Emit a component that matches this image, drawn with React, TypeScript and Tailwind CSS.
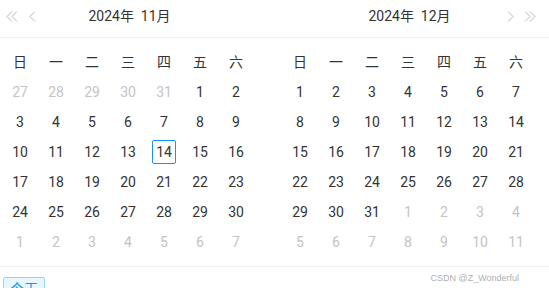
import React from "react";

type Cell = { d: number; muted?: boolean; selected?: boolean };

const week = ["日", "一", "二", "三", "四", "五", "六"];

function buildNov(): Cell[] {
  const cells: Cell[] = [];
  [27, 28, 29, 30, 31].forEach((d) => cells.push({ d, muted: true }));
  for (let d = 1; d <= 30; d++) cells.push({ d, selected: d === 14 });
  for (let d = 1; d <= 7; d++) cells.push({ d, muted: true });
  return cells;
}

function buildDec(): Cell[] {
  const cells: Cell[] = [];
  for (let d = 1; d <= 31; d++) cells.push({ d });
  for (let d = 1; d <= 11; d++) cells.push({ d, muted: true });
  return cells;
}

function Chevron({ dir }: { dir: "l" | "r" }) {
  return (
    <svg width="7" height="11" viewBox="0 0 7 11" fill="none">
      <path
        d={dir === "l" ? "M6 0.5L1 5.5L6 10.5" : "M1 0.5L6 5.5L1 10.5"}
        stroke="#b8b8b8"
        strokeWidth="1"
      />
    </svg>
  );
}

function Double({ dir }: { dir: "l" | "r" }) {
  return (
    <svg width="12" height="11" viewBox="0 0 12 11" fill="none">
      {dir === "l" ? (
        <>
          <path d="M6 0.5L1 5.5L6 10.5" stroke="#b8b8b8" strokeWidth="1" />
          <path d="M11 0.5L6 5.5L11 10.5" stroke="#b8b8b8" strokeWidth="1" />
        </>
      ) : (
        <>
          <path d="M1 0.5L6 5.5L1 10.5" stroke="#b8b8b8" strokeWidth="1" />
          <path d="M6 0.5L11 5.5L6 10.5" stroke="#b8b8b8" strokeWidth="1" />
        </>
      )}
    </svg>
  );
}

function Header({ title, side }: { title: string; side: "l" | "r" }) {
  return (
    <div className="grid h-[32px] w-[252px] grid-cols-[44px_1fr_44px] items-center">
      <div className="flex items-center">
        {side === "l" && (
          <>
            <span className="ml-[4px] flex"><Double dir="l" /></span>
            <span className="ml-[11px] flex"><Chevron dir="l" /></span>
          </>
        )}
      </div>
      <div className="whitespace-pre pl-[3px] text-center text-[14px] text-[#333333]">
        {title}
      </div>
      <div className="flex items-center">
        {side === "r" && (
          <>
            <span className="ml-[17px] flex"><Chevron dir="r" /></span>
            <span className="ml-[10px] flex"><Double dir="r" /></span>
          </>
        )}
      </div>
    </div>
  );
}

function Grid({ cells }: { cells: Cell[] }) {
  return (
    <div className="grid w-[252px] grid-cols-7">
      {week.map((w) => (
        <div key={w} className="flex h-[30px] items-center justify-center text-[14px] text-[#333333]">
          {w}
        </div>
      ))}
      {cells.map((c, i) => (
        <div key={i} className="flex h-[30px] items-center justify-center">
          <div
            className={
              "flex h-[24px] w-[24px] items-center justify-center rounded-[2px] text-[14px] " +
              (c.muted ? "text-[#c4c4c4] " : "text-[#333333] ") +
              (c.selected ? "border border-[#1890ff]" : "")
            }
          >
            {c.d}
          </div>
        </div>
      ))}
    </div>
  );
}

export default function App() {
  return (
    <div
      className="relative h-[288px] w-[549px] overflow-hidden bg-white"
      style={{ fontFamily: "Roboto, 'Noto Sans CJK SC', sans-serif" }}
    >
      <div className="flex h-[38px] border-b border-[#f0f0f0] pl-[2px]">
        <Header title="2024年  11月" side="l" />
        <div className="w-[28px]" />
        <Header title="2024年  12月" side="r" />
      </div>
      <div className="flex border-b border-[#f0f0f0] pl-[2px] pt-[9px] pb-[9px]">
        <Grid cells={buildNov()} />
        <div className="w-[28px]" />
        <Grid cells={buildDec()} />
      </div>
      <div className="flex pl-[3px] pt-[10px]">
        <div className="flex h-[24px] items-center rounded-[2px] border border-[#91d5ff] bg-[#e6f7ff] px-[6px] text-[14px] text-[#1890ff]">
          今天
        </div>
      </div>
      <div
        className="absolute right-[30px] top-[272px] text-[9px] text-[#b0b0b0]"
        style={{ fontFamily: "'Liberation Sans', sans-serif" }}
      >
        CSDN @Z_Wonderful
      </div>
    </div>
  );
}
